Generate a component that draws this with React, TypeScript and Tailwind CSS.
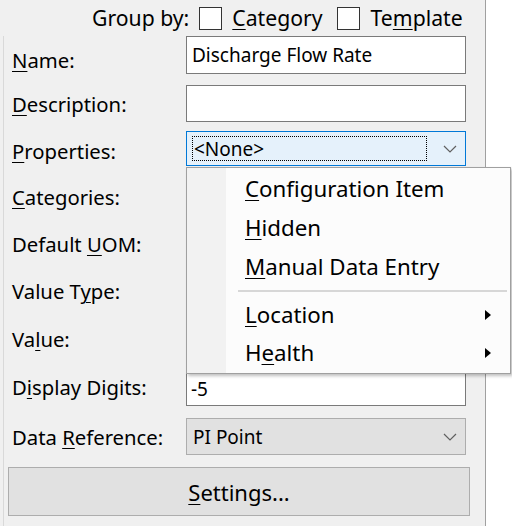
import React from "react";

const U = ({ children }: { children: React.ReactNode }) => (
  <span className="underline decoration-1 underline-offset-[3px]">{children}</span>
);

const Chevron = () => (
  <svg width="14" height="8" viewBox="0 0 14 8" className="shrink-0">
    <path d="M1 1 L7 7 L13 1" fill="none" stroke="#606060" strokeWidth="1.2" />
  </svg>
);

const Arrow = () => (
  <svg width="6" height="10" viewBox="0 0 6 10" className="shrink-0">
    <path d="M0 0 L6 5 L0 10 Z" fill="#000" />
  </svg>
);

function Row({
  h,
  pt,
  label,
  children,
}: {
  h: number;
  pt: number;
  label: React.ReactNode;
  children?: React.ReactNode;
}) {
  return (
    <div className="flex" style={{ height: h }}>
      <div className="w-[182px] pl-[8px] leading-[20px] text-[20.3px] whitespace-nowrap" style={{ paddingTop: pt }}>
        {label}
      </div>
      <div className="w-[280px] text-[19px]">{children}</div>
    </div>
  );
}

export default function App() {
  return (
    <div
      className="relative w-[512px] h-[526px] overflow-hidden bg-white text-[#000] text-[19px]"
      style={{ fontFamily: '"Noto Sans", "Open Sans", sans-serif' }}
    >
      <div className="w-[486px] h-[526px] bg-[#f0f0f0] border-r border-[#a0a0a0] flex flex-col">
        {/* Group by */}
        <div className="h-[36px] flex items-center pl-[92px] leading-[20px] whitespace-nowrap text-[21.2px]">
          <span>Group by:</span>
          <span className="ml-[10px] w-[23px] h-[23px] bg-white border border-[#333]" />
          <span className="ml-[10px]">
            <U>C</U>ategory
          </span>
          <span className="ml-[14px] w-[23px] h-[23px] bg-white border border-[#333]" />
          <span className="ml-[11px]">
            Te<U>m</U>plate
          </span>
        </div>

        <div className="ml-[3px] border-l border-[#d9d9d9] flex-1 flex flex-col">
          <Row h={49} pt={14} label={<><U>N</U>ame:</>}>
            <div className="h-[38px] bg-white border border-[#7a7a7a] flex items-center pl-[5px] leading-[20px]">
              Discharge Flow Rate
            </div>
          </Row>
          <Row h={46} pt={9} label={<><U>D</U>escription:</>}>
            <div className="h-[37px] bg-white border border-[#7a7a7a]" />
          </Row>
          <Row h={47} pt={10} label={<><U>P</U>roperties:</>}>
            <div className="h-[35px] bg-[#e5f1fb] border border-[#0078d7] flex items-center pl-[5px] pr-[8px]">
              <div className="flex-1 h-[25px] border border-dotted border-[#000] flex items-center leading-[20px] pl-[1px]">
                &lt;None&gt;
              </div>
              <div className="w-[30px] flex justify-end">
                <Chevron />
              </div>
            </div>
          </Row>
          <Row h={47} pt={9} label={<><U>C</U>ategories:</>} />
          <Row h={47} pt={9} label={<>Default <U>U</U>OM:</>} />
          <Row h={47} pt={9} label={<>Value T<U>y</U>pe:</>} />
          <Row h={52} pt={10} label={<>Va<U>l</U>ue:</>} />
          <Row h={47} pt={6} label={<>D<U>i</U>splay Digits:</>}>
            <div className="h-[35px] bg-white border border-[#7a7a7a] flex items-center pl-[4px] leading-[20px]">
              -5
            </div>
          </Row>
          <Row h={49} pt={9} label={<>Data <U>R</U>eference:</>}>
            <div className="h-[37px] bg-[#e1e1e1] border border-[#adadad] flex items-center pl-[6px] pr-[8px] leading-[20px]">
              <span className="flex-1">PI Point</span>
              <Chevron />
            </div>
          </Row>
          <div className="ml-[4px] w-[462px] h-[49px] bg-[#e1e1e1] border border-[#adadad] flex items-center justify-center leading-[20px] text-[22px]">
            <span>
              <U>S</U>ettings...
            </span>
          </div>
        </div>
      </div>

      {/* Dropdown menu */}
      <div className="absolute left-[186px] top-[167px] w-[325px] bg-[#fcfcfc] border border-[#a0a0a0] shadow-[2px_2px_3px_rgba(0,0,0,0.25)] pt-[1px] pb-[1px] leading-[20px] text-[22.3px]">
        <div className="absolute left-0 top-0 bottom-0 w-[39px] bg-[#f2f2f2]" />
        <div className="relative">
          <div className="h-[39px] flex items-center pl-[58px]">
            <U>C</U>onfiguration Item
          </div>
          <div className="h-[39px] flex items-center pl-[58px]">
            <U>H</U>idden
          </div>
          <div className="h-[39px] flex items-center pl-[58px]">
            <U>M</U>anual Data Entry
          </div>
          <div className="h-[9px] flex items-center pl-[51px] pr-[3px]">
            <div className="w-full h-[2px] bg-[#d7d7d7]" />
          </div>
          <div className="h-[39px] flex items-center pl-[58px] pr-[19px]">
            <span className="flex-1">
              <U>L</U>ocation
            </span>
            <Arrow />
          </div>
          <div className="h-[38px] flex items-center pl-[58px] pr-[19px]">
            <span className="flex-1">
              H<U>e</U>alth
            </span>
            <Arrow />
          </div>
        </div>
      </div>
    </div>
  );
}
